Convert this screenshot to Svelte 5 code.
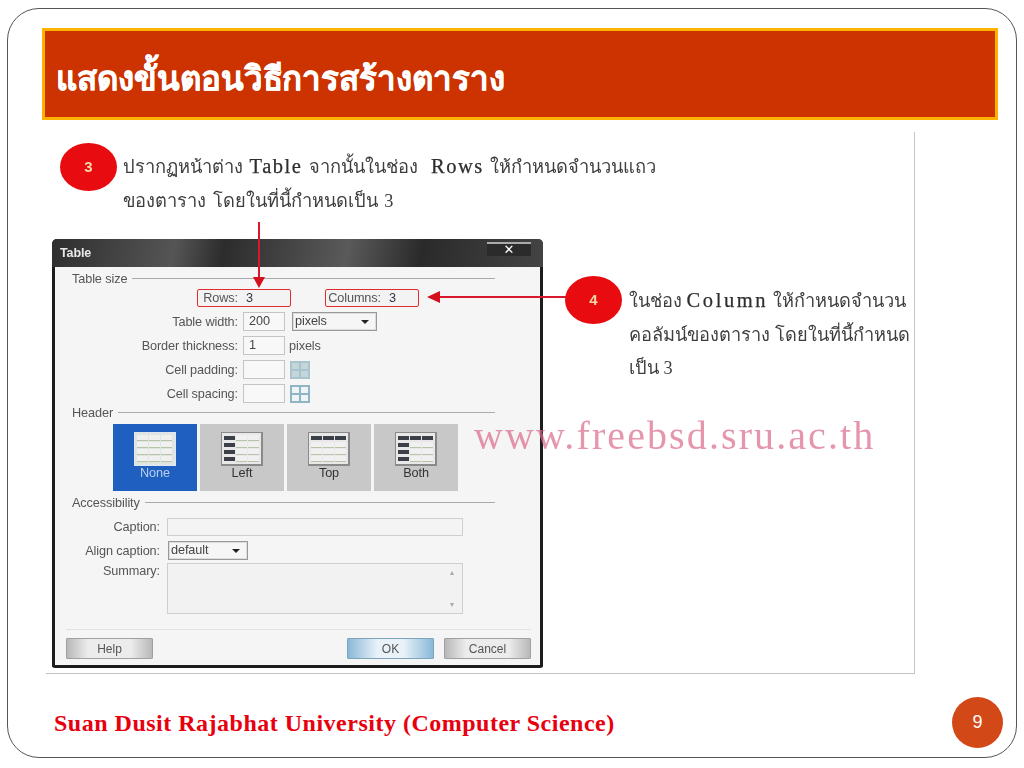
<script>
  const rows = [
    { label: 'Table width:', value: '200', after: 'select' },
    { label: 'Border thickness:', value: '1', after: 'pixels' },
    { label: 'Cell padding:', value: '', after: 'pad' },
    { label: 'Cell spacing:', value: '', after: 'space' }
  ];
  const tiles = [
    { name: 'None', head: false, side: false, on: true },
    { name: 'Left', head: false, side: true, on: false },
    { name: 'Top', head: true, side: false, on: false },
    { name: 'Both', head: true, side: true, on: false }
  ];
  const cells = [0, 1, 2, 3, 4, 5, 6, 7, 8, 9, 10, 11];
</script>

<div class="slide">
  <header class="title"><h1>แสดงขั้นตอนวิธีการสร้างตาราง</h1></header>

  <section class="shot">
    <div class="note">
      <span class="dot">3</span>
      <p>ปรากฏหน้าต่าง <b>Table</b> จากนั้นในช่อง&nbsp; <b>Rows</b> ให้กำหนดจำนวนแถว<br />ของตาราง โดยในที่นี้กำหนดเป็น 3</p>
    </div>

    <div class="lower">
      <div class="dialog">
        <div class="bar"><span>Table</span><i class="close">✕</i></div>
        <div class="body">
          <div class="legend first"><span>Table size</span><hr /></div>
          <div class="counts">
            <div class="mark rows"><span>Rows:</span><em>3</em></div>
            <div class="mark cols"><span>Columns:</span><em>3</em></div>
          </div>
          {#each rows as r}
            <div class="row">
              <label>{r.label}</label>
              <span class="field">{r.value}</span>
              {#if r.after === 'select'}
                <span class="select wide">pixels<i></i></span>
              {:else if r.after === 'pixels'}
                <span class="unit">pixels</span>
              {:else}
                <span class="glyph" class:pad={r.after === 'pad'}>
                  <b></b><b></b><b></b><b></b>
                </span>
              {/if}
            </div>
          {/each}

          <div class="legend head"><span>Header</span><hr /></div>
          <div class="tiles">
            {#each tiles as t}
              <div class="tile" class:on={t.on}>
                <div class="tbl">
                  {#each cells as c}
                    <s class:dark={(t.head && c < 3) || (t.side && c % 3 === 0)}></s>
                  {/each}
                </div>
                <span>{t.name}</span>
              </div>
            {/each}
          </div>

          <div class="legend acc"><span>Accessibility</span><hr /></div>
          <div class="wide-row cap"><label>Caption:</label><span class="long"></span></div>
          <div class="wide-row alg"><label>Align caption:</label><span class="select small">default<i></i></span></div>
          <div class="wide-row sum">
            <label>Summary:</label>
            <span class="area"><u>▴</u><u>▾</u></span>
          </div>
          <div class="foot">
            <button>Help</button>
            <span class="grow"></span>
            <button class="ok">OK</button>
            <button>Cancel</button>
          </div>
        </div>
      </div>

      <div class="side">
        <span class="dot four">4</span>
        <p>ในช่อง <b>Column</b> ให้กำหนดจำนวน<br />คอลัมน์ของตาราง โดยในที่นี้กำหนด<br />เป็น 3</p>
      </div>
    </div>

    <div class="wm">www.freebsd.sru.ac.th</div>
    <svg class="arrows" width="868" height="541" viewBox="0 0 868 541" aria-hidden="true">
      <path d="M213 90V146" stroke="#d8182c" stroke-width="2" />
      <path d="M207 145h12l-6 11z" fill="#d4101c" />
      <path d="M520 165H392" stroke="#d8182c" stroke-width="2" />
      <path d="M394 159v12l-13-6z" fill="#d4101c" />
    </svg>
  </section>

  <footer class="foot-bar">
    <span class="uni">Suan Dusit Rajabhat University (Computer Science)</span>
    <span class="num">9</span>
  </footer>
</div>

<style>
  :global(body) { margin: 0; background: #fff; }
  .slide {
    box-sizing: border-box;
    width: 1010px;
    height: 750px;
    margin: 8px 0 0 7px;
    border: 1px solid #555;
    border-radius: 32px;
    padding: 19px 19px 0 34px;
    display: flex;
    flex-direction: column;
    font-family: "Liberation Serif", "Noto Sans", serif;
    overflow: hidden;
  }
  .title {
    box-sizing: border-box;
    width: 956px;
    height: 92px;
    background: #cc3300;
    border: 3px solid #ffb300;
    display: flex;
    align-items: center;
    padding: 8px 0 0 11px;
    flex: none;
  }
  h1 {
    margin: 0;
    color: #fff;
    font: 700 33px "Noto Sans", "DejaVu Sans", sans-serif;
    letter-spacing: -0.05px;
    -webkit-text-stroke: .4px #fff;
    white-space: nowrap;
  }
  .shot {
    box-sizing: border-box;
    position: relative;
    width: 869px;
    height: 542px;
    margin: 12px 0 0 4px;
    border-right: 1px solid #c4c4c4;
    border-bottom: 1px solid #c4c4c4;
    padding: 11px 0 0 14px;
    flex: none;
  }
  .note { display: flex; gap: 6px; height: 96px; }
  .dot {
    flex: none;
    width: 57px;
    height: 48px;
    border-radius: 50%;
    background: #e80c10;
    color: #f4d8a8;
    font: 700 15px/48px "Liberation Sans", sans-serif;
    text-align: center;
    filter: blur(.6px);
  }
  .note p, .side p {
    margin: 0;
    color: #3e3e3e;
    line-height: 33.5px;
    filter: blur(.55px);
    white-space: nowrap;
    font-family: "Liberation Serif", "Noto Sans", serif;
  }
  .note p { margin-top: 7px; font-size: 18.3px; word-spacing: 2px; }
  .note p b, .side p b { font-weight: 400; font-size: 20.5px; letter-spacing: 1.5px; color: #2e2e2e; -webkit-text-stroke: .25px #2e2e2e; }
  .lower { display: flex; margin-left: -8px; }
  .dialog {
    box-sizing: border-box;
    width: 491px;
    height: 429px;
    flex: none;
    border: 3px solid #1c1c1c;
    border-top: 0;
    border-radius: 5px 5px 3px 3px;
    background: #f5f5f5;
    font: 12.7px "Liberation Sans", sans-serif;
    letter-spacing: -.1px;
    color: #555;
    filter: blur(.7px);
    display: flex;
    flex-direction: column;
  }
  .bar {
    height: 28px;
    flex: none;
    margin: 0 -3px;
    border-radius: 5px 5px 0 0;
    background: linear-gradient(100deg, #2e2e2e, #555 25%, #2c2c2c 35%, #5a5a5a 60%, #2a2a2a 75%, #444);
    color: #e8e8e8;
    font-weight: 700;
    font-size: 12.5px;
    display: flex;
    justify-content: space-between;
    align-items: center;
    padding: 0 12px 0 8px;
  }
  .close {
    width: 44px;
    height: 12px;
    margin-top: -9px;
    background: #2b2b2b;
    border-top: 2px solid #aaa;
    font: 700 13px/12px "DejaVu Sans", sans-serif;
    text-align: center;
    color: #fff;
  }
  .body { position: relative; flex: 1; padding: 0 8px 0 0; }
  .legend { display: flex; align-items: center; gap: 5px; margin-left: 17px; margin-right: 37px; }
  .legend span { white-space: nowrap; }
  .legend hr { flex: 1; height: 1px; border: 0; margin: 0; background: #aaa; }
  .legend.first { margin-top: 5px; height: 13px; }
  .counts { display: flex; gap: 34px; margin: 4px 0 0 142px; }
  .mark {
    box-sizing: border-box;
    width: 94px;
    height: 18px;
    border: 1.5px solid #e02a30;
    border-radius: 2px;
    display: flex;
    align-items: center;
    color: #555;
    background: #f3f3f3;
  }
  .mark.rows span { width: 40px; text-align: right; }
  .mark.cols span { width: 55px; text-align: right; }
  .mark em { font-style: normal; margin-left: 8px; color: #334; }
  .row { display: flex; align-items: center; height: 19px; margin-top: 5px; }
  .row label { width: 183px; text-align: right; flex: none; }
  .field {
    box-sizing: border-box;
    width: 42px;
    height: 19px;
    margin-left: 5px;
    border: 1px solid #c4c4c4;
    background: #f8f8f8;
    padding: 1px 0 0 5px;
    color: #444;
  }
  .select {
    box-sizing: border-box;
    position: relative;
    height: 19px;
    border: 1px solid #999;
    background: #f6f6f6;
    padding: 1px 0 0 2px;
    color: #444;
    box-shadow: inset 0 0 0 1px #ddd;
  }
  .select i {
    position: absolute;
    right: 7px;
    top: 7px;
    border: 4px solid transparent;
    border-top: 4px solid #222;
    border-bottom: 0;
  }
  .wide { width: 85px; margin-left: 7px; }
  .unit { margin-left: 4px; }
  .glyph {
    box-sizing: border-box;
    width: 20px;
    height: 18px;
    margin-left: 5px;
    padding: 2px;
    background: #8fb4c4;
    display: grid;
    grid-template-columns: 1fr 1fr;
    gap: 2px;
  }
  .glyph b { background: #eef3f5; }
  .glyph.pad { background: #a8c4cc; }
  .glyph.pad b { background: #c4d6da; }
  .legend.head { margin-top: 3px; height: 13px; }
  .tiles { display: flex; margin: 5px 0 0 58px; gap: 3px; height: 67px; }
  .tile {
    width: 84px;
    background: #c8c8c8;
    display: flex;
    flex-direction: column;
    align-items: center;
    padding-top: 8px;
    box-sizing: border-box;
    color: #333;
  }
  .tile.on { background: #1f5fc0; color: #b8d0f0; }
  .tbl {
    box-sizing: border-box;
    width: 42px;
    height: 34px;
    padding: 2px;
    border: 1px solid #8a8a8a;
    border-width: 1px 2px 2px 1px;
    background: #e8e8e8;
    display: grid;
    grid-template-columns: repeat(3, 1fr);
    grid-template-rows: repeat(4, 1fr);
    gap: 1px;
  }
  .tile.on .tbl { background: #dfe6e0; border-color: #dfe6f0; }
  .tbl s { background: #f0f0f0; border-bottom: 1px solid #b8c4a8; }
  .tbl s.dark { background: #3a3f48; border: 0; margin: 1px 0; }
  .legend.acc { margin-top: 5px; height: 13px; }
  .wide-row { display: flex; }
  .wide-row label { width: 105px; text-align: right; flex: none; }
  .cap { margin-top: 9px; align-items: center; height: 18px; }
  .long {
    box-sizing: border-box;
    width: 296px;
    height: 18px;
    margin-left: 7px;
    border: 1px solid #cfcfcf;
    background: #f4f4f4;
  }
  .alg { margin-top: 5px; align-items: center; height: 19px; }
  .small { width: 80px; margin-left: 8px; padding-left: 2px; }
  .sum { margin-top: 3px; height: 51px; }
  .sum label { padding-top: 1px; }
  .area {
    box-sizing: border-box;
    width: 296px;
    height: 51px;
    margin-left: 7px;
    border: 1px solid #cfcfcf;
    background: #f2f2f2;
    display: flex;
    flex-direction: column;
    align-items: flex-end;
    justify-content: space-between;
    padding: 4px 8px;
    font-size: 8px;
    color: #aaa;
  }
  .area u { text-decoration: none; }
  .foot {
    display: flex;
    gap: 10px;
    margin: 15px 0 0 11px;
    padding-top: 8px;
    border-top: 1px solid #e2e2e2;
    width: 465px;
  }
  .foot .grow { flex: 1; }
  button {
    box-sizing: border-box;
    width: 87px;
    height: 21px;
    padding: 0;
    border: 1px solid #a0a0a0;
    border-radius: 1px;
    font: 12px "Liberation Sans", sans-serif;
    color: #555;
    background: linear-gradient(90deg, #b8b8b8, #ececec 25%, #ececec 75%, #b8b8b8);
  }
  button.ok { background: linear-gradient(90deg, #8ab8d8, #e8f2f8 35%, #e8f2f8 65%, #8ab8d8); border-color: #7ea4bc; }
  .side { display: flex; gap: 7px; margin: 37px 0 0 22px; }
  .four { width: 57px; margin-top: 0; }
  .side p { margin-top: 8px; font-size: 18.2px; }
  .side p b { letter-spacing: 2.6px; }
  .wm {
    position: absolute;
    left: 428px;
    top: 280px;
    font: 40px "Liberation Serif", serif;
    letter-spacing: 2.1px;
    color: rgba(220, 110, 140, .72);
    filter: blur(.5px);
    white-space: nowrap;
  }
  .arrows { position: absolute; left: 0; top: 0; pointer-events: none; filter: blur(.3px); }
  .foot-bar {
    display: flex;
    justify-content: space-between;
    align-items: center;
    margin: 23px 0 0 12px;
    width: 949px;
  }
  .uni {
    color: #e8000f;
    font: 700 24px "Liberation Serif", serif;
    letter-spacing: .5px;
    white-space: nowrap;
    margin-top: 2px;
  }
  .num {
    width: 51px;
    height: 51px;
    border-radius: 50%;
    background: #d34817;
    color: #fff;
    font: 18px/51px "Liberation Sans", sans-serif;
    text-align: center;
  }
</style>
